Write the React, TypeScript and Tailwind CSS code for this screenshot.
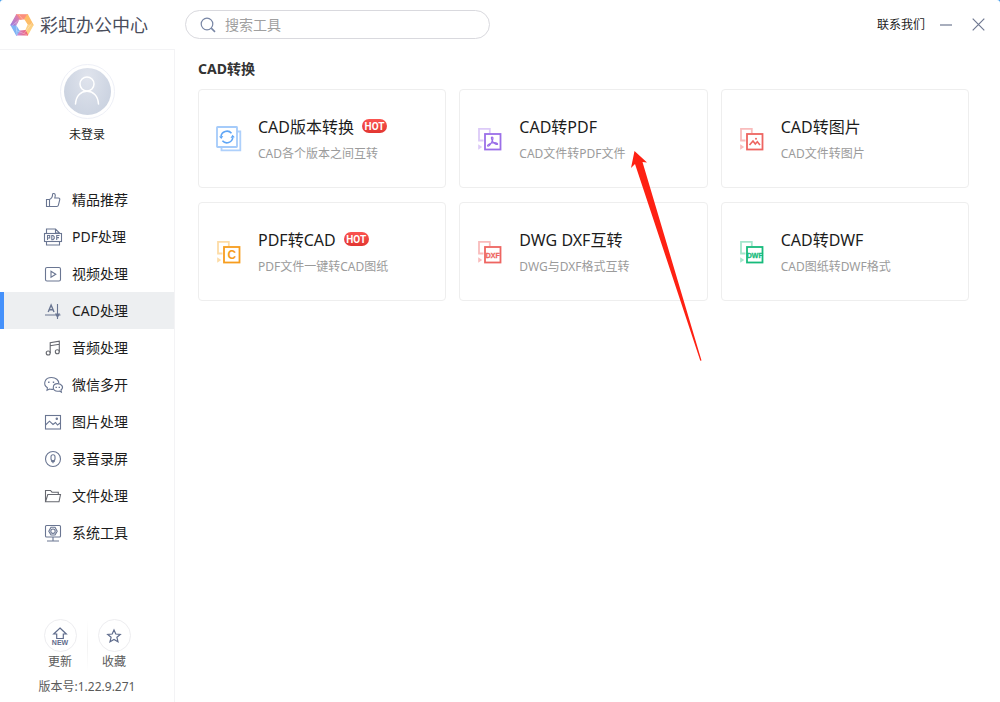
import React from "react";

const Logo = () => (
  <svg className="size-6 shrink-0" viewBox="0 0 24 24">
    <defs>
      <linearGradient id="logoLeft" x1="1" y1="0" x2="0" y2="1">
        <stop offset="0" stopColor="#ef7f9d" />
        <stop offset="1" stopColor="#9a7be0" />
      </linearGradient>
      <linearGradient id="logoBottom" x1="1" y1="0" x2="0" y2="0">
        <stop offset="0" stopColor="#f4606e" />
        <stop offset="1" stopColor="#c58be0" />
      </linearGradient>
    </defs>
    <g strokeLinejoin="round" strokeWidth="1.2">
      <path d="M6.5 1.8 L17.5 1.8 L15.5 7 L9.5 7 Z" fill="#fb8f7d" stroke="#fb8f7d" />
      <path d="M17.5 1.8 L23 12 L17.8 12 L14.5 6.5 Z" fill="#fdbd68" stroke="#fdbd68" />
      <path d="M23 12 L17.5 22 L14.6 17.4 L17.8 12 Z" fill="#fcd184" stroke="#fcd184" />
      <path d="M17.5 22 L6.5 22 L9.5 17 L15 17 Z" fill="url(#logoBottom)" stroke="url(#logoBottom)" />
      <path d="M6.5 22 L1 12 L6.2 12 L9.4 17.4 Z" fill="#7fb4f5" stroke="#7fb4f5" />
      <path d="M1 12 L6.5 2 L9.5 6.6 L6.2 12 Z" fill="url(#logoLeft)" stroke="url(#logoLeft)" />
    </g>
    <path d="M9 2 L18.3 12.6 M22 10 L14 20.5 M17.5 22 L6 17.5 M7 22 L6 9 M1.5 13 L10 6" stroke="#fff" strokeWidth="0.5" opacity="0.6" />
    <path d="M9.2 7 L14.4 6.6 L17.6 11.6 L15.4 17 L9.6 17.4 L6.4 12.6 Z" fill="#fff" />
  </svg>
);

// Sidebar entries, each with its own 18px line icon
const menu = [
  {
    label: "精品推荐",
    icon: (
      <path d="M2.5 8.5 H5.5 V15.5 H2.5 Z M5.5 8.5 C7.5 7.5 8.6 5.5 8.6 3.2 C8.8 2 11.3 2.2 11.3 4.5 L10.8 7 H14.3 C15.6 7 16 7.8 15.7 8.8 L14.4 14.2 C14.2 15.1 13.6 15.5 12.8 15.5 H5.5" />
    ),
  },
  {
    label: "PDF处理",
    icon: (
      <>
        <path d="M2.5 5.5 V1 H11.5 L15.5 5 V5.5 M11.5 1 V5 H15.5 M2.5 13.5 V17 H15.5 V13.5" />
        <rect x="0.5" y="5.5" width="17" height="8" />
        <path d="M3.5 12 V7.5 H5.7 V10 H3.5 M7.8 7.5 V11.7 H9 L10.2 10.5 V8.7 L9 7.5 Z M12.7 12 V7.5 H15.5 M12.7 9.6 H15" />
      </>
    ),
  },
  {
    label: "视频处理",
    icon: (
      <>
        <rect x="1.5" y="2.5" width="15" height="13.5" rx="1.5" />
        <path d="M7 6.3 L11.8 9.2 L7 12.2 Z" />
      </>
    ),
  },
  {
    label: "CAD处理",
    active: true,
    icon: (
      <>
        <path d="M4.2 10 L7.1 3 L10 10 M5.3 7.8 H9" strokeWidth="1.4" />
        <path d="M1 13 H16.5 M13.5 2 V17" />
        <path d="M11.8 12 L13.5 15.2 L15.2 12 Z" fill="#6a7692" />
      </>
    ),
  },
  {
    label: "音频处理",
    dark: true,
    icon: (
      <>
        <path d="M6.2 14 V3.8 L15.3 2.2 V12.8 M6.2 6.7 L15.3 5.2" />
        <circle cx="4.2" cy="14" r="2" />
        <circle cx="13.3" cy="12.8" r="2" />
      </>
    ),
  },
  {
    label: "微信多开",
    icon: (
      <>
        <path d="M9.5 13.2 C8 13.5 6.7 13.4 5.5 13 L3 14.2 L3.4 11.8 C-1.6 8.3 0.8 1.5 7.5 1.5 C12 1.5 14.8 4.3 14.8 7.3" />
        <path d="M13.7 7.6 C8 7.6 7.6 15.3 13.7 15.3 C14.4 15.3 15 15.2 15.5 15 L17.4 16.2 L17 14 C20.3 11.5 17.7 7.6 13.7 7.6 Z" />
        <path d="M4.8 5.5 V7 M9.5 5.5 V7 M12.2 10.8 V12 M15.3 10.8 V12" strokeWidth="1.4" />
      </>
    ),
  },
  {
    label: "图片处理",
    icon: (
      <>
        <rect x="1.5" y="2.5" width="15" height="13.5" />
        <path d="M1.5 12 L5.5 8.2 L9 11.5 L11.5 9.5 L13.5 12 L16.5 9.8" />
        <circle cx="12.8" cy="5.7" r="0.7" />
      </>
    ),
  },
  {
    label: "录音录屏",
    icon: (
      <>
        <circle cx="9" cy="9" r="7.5" />
        <rect x="7" y="4.8" width="4" height="6" rx="2" />
        <path d="M9 10.8 V13.3 M7.3 11.3 C8.3 12 9.7 12 10.7 11.3" />
      </>
    ),
  },
  {
    label: "文件处理",
    dark: true,
    icon: (
      <path d="M1.5 14.8 V3.5 H6.5 L8 5.2 H14.3 V7.5 M1.5 14.8 L3.8 7.5 H16.5 L15 14.8 Z" />
    ),
  },
  {
    label: "系统工具",
    icon: (
      <>
        <rect x="1.5" y="1.5" width="15" height="11.5" rx="1" />
        <path d="M9 13 V16.5 M3 17 H15 M7 3.3 H11 L13.2 7.2 L11 11 H7 L4.8 7.2 Z" />
        <circle cx="9" cy="7.2" r="2.2" />
      </>
    ),
  },
];

// Two overlapping sheets with a small arrow, shared by most tools
const ConvertIcon = ({ color, light, children }: { color: string; light: string; children: React.ReactNode }) => (
  <svg className="size-[26px] shrink-0 font-['Liberation_Sans',sans-serif]" viewBox="0 0 26 26" fill="none">
    <path d="M6.5 14.5 H2 V2.8 H12.8 V7" stroke={light} strokeWidth="1.8" />
    <path d="M1.2 18.2 L5.2 21 L1.2 23.8 Z" fill={light} />
    <rect x="8" y="8" width="15.5" height="15.5" stroke={color} strokeWidth="1.8" />
    {children}
  </svg>
);

const tools = [
  {
    title: "CAD版本转换",
    desc: "CAD各个版本之间互转",
    hot: true,
    icon: (
      <svg className="size-[26px] shrink-0" viewBox="0 0 26 26" fill="none">
        <path d="M21 5.5 H24.3 V24.3 H5.5 V21" stroke="#aed0fb" strokeWidth="1.8" />
        <rect x="1" y="1" width="20" height="20" rx="0.5" stroke="#a5cbfa" strokeWidth="1.8" />
        <path d="M5 10.5 A6 6 0 0 1 15.5 7.2 M16.8 11.5 A6 6 0 0 1 6.4 14.8" stroke="#5fa6f6" strokeWidth="1.6" />
        <path d="M3 10.5 L7.3 10 L5.3 13 Z M18.8 11.3 L14.5 12 L16.5 8.8 Z" fill="#5fa6f6" />
      </svg>
    ),
  },
  {
    title: "CAD转PDF",
    desc: "CAD文件转PDF文件",
    icon: (
      <ConvertIcon color="#9b6fe8" light="#dccaf8">
        <path d="M15 11 C16.7 11 15.8 14 14.6 16.3 C13.4 18.7 11.6 20.7 10.7 20 C9.9 19.2 12.4 17.6 15.2 17 C18.1 16.3 20.7 16.9 20.6 18 C20.3 19.2 17.5 17.8 16 15.8 C14.6 13.8 13.8 11.1 15 11 Z" stroke="#9b6fe8" strokeWidth="1.2" />
      </ConvertIcon>
    ),
  },
  {
    title: "CAD转图片",
    desc: "CAD文件转图片",
    icon: (
      <ConvertIcon color="#ee6561" light="#f9bcbc">
        <path d="M10.5 19 L14 15 L16.3 18 L18.3 15.8 L21 19" stroke="#ee6561" strokeWidth="1.6" />
        <circle cx="17" cy="12.8" r="1" fill="#ee6561" />
      </ConvertIcon>
    ),
  },
  {
    title: "PDF转CAD",
    desc: "PDF文件一键转CAD图纸",
    hot: true,
    icon: (
      <ConvertIcon color="#f79d1e" light="#fddca6">
        <text x="15.8" y="20.2" textAnchor="middle" fontSize="12" fontWeight="700" fill="#f79d1e">C</text>
      </ConvertIcon>
    ),
  },
  {
    title: "DWG DXF互转",
    desc: "DWG与DXF格式互转",
    icon: (
      <ConvertIcon color="#ee6561" light="#f9bcbc">
        <text x="15.8" y="18.6" textAnchor="middle" fontSize="7" fontWeight="700" fill="#ee6561" stroke="#ee6561" strokeWidth="0.3">DXF</text>
      </ConvertIcon>
    ),
  },
  {
    title: "CAD转DWF",
    desc: "CAD图纸转DWF格式",
    icon: (
      <ConvertIcon color="#17bb7c" light="#a3e6cb">
        <text x="15.8" y="18.6" textAnchor="middle" fontSize="7" fontWeight="700" fill="#17bb7c" stroke="#17bb7c" strokeWidth="0.3">DWF</text>
      </ConvertIcon>
    ),
  },
];

const App = () => {
  return (
    <div className="bg-[#3f9bea]">
      <div className="relative flex min-h-screen rounded-t-[3px] bg-white font-['Noto_Sans','Noto_Sans_CJK_SC',sans-serif] text-[#1c1c1c]">
        {/* Sidebar */}
        <aside className="flex w-[175px] shrink-0 flex-col">
          <div className="flex h-[50px] items-center gap-1.5 border-b border-[#f3f3f5] pl-2.5">
            <Logo />
            <h1 className="text-lg whitespace-nowrap text-[#4a4e5c]">彩虹办公中心</h1>
          </div>

          <div className="flex flex-1 flex-col border-r border-[#f3f3f5] pt-3.5">
            <button className="flex flex-col items-center">
              <span className="flex size-[55px] items-center justify-center rounded-full border border-[#eef0f7]">
                <span className="flex size-[47px] items-center justify-center rounded-full bg-radial-[at_50%_20%] from-[#e0e4ed] to-[#c5cedd]">
                  <svg className="size-8" viewBox="0 0 32 32" fill="none" stroke="#fff" strokeWidth="1.5" strokeLinecap="round">
                    <circle cx="16" cy="8" r="7" />
                    <path d="M4.5 28 C5 19.5 10 15.3 16 15.3 C22 15.3 27 19.5 27.5 28" />
                  </svg>
                </span>
              </span>
              <span className="mt-1.5 text-xs leading-5">未登录</span>
            </button>

            <nav className="mt-9">
              {menu.map((item) => (
                <a
                  key={item.label}
                  href="#"
                  className={
                    item.active
                      ? "flex h-[37px] items-center gap-2.5 border-l-4 border-[#4591fb] bg-[#edeff1] pl-10 text-sm"
                      : "flex h-[37px] items-center gap-2.5 border-l-4 border-transparent pl-10 text-sm"
                  }
                >
                  <svg
                    className="size-[18px] shrink-0 overflow-visible"
                    viewBox="0 0 18 18"
                    fill="none"
                    stroke={item.dark ? "#66686f" : "#6a7692"}
                    strokeWidth="1.1"
                  >
                    {item.icon}
                  </svg>
                  {item.label}
                </a>
              ))}
            </nav>

            <div className="mt-auto pt-6 pb-[7px] text-center text-xs text-[#5a5a5a]">
              <div className="flex justify-center gap-2.5">
                <button className="flex w-[33px] flex-col items-center">
                  <span className="flex size-[33px] items-center justify-center rounded-full border border-[#ededf0]">
                    <svg className="size-[18px] overflow-visible font-['Liberation_Sans',sans-serif]" viewBox="0 0 18 18" fill="none">
                      <path d="M9 1 L15.3 7 H12.3 V11.5 H5.7 V7 H2.7 Z" stroke="#5f6c8c" strokeWidth="1.2" />
                      <text x="9" y="18" textAnchor="middle" fontSize="7" fontWeight="700" fill="#5f6c8c">NEW</text>
                    </svg>
                  </span>
                  <span className="leading-5">更新</span>
                </button>
                <span className="w-px bg-linear-to-b from-white via-[#f2f2f2] to-white" />
                <button className="flex w-[33px] flex-col items-center">
                  <span className="flex size-[33px] items-center justify-center rounded-full border border-[#ededf0]">
                    <svg className="size-4" viewBox="0 0 16 16" fill="none" stroke="#5f6c8c" strokeWidth="1.2">
                      <path d="M8 2 L9.8 6 L14.3 6.4 L10.9 9.3 L12 13.8 L8 11.4 L4 13.8 L5.1 9.3 L1.7 6.4 L6.2 6 Z" />
                    </svg>
                  </span>
                  <span className="leading-5">收藏</span>
                </button>
              </div>
              <p className="mt-[7px] leading-4">版本号:1.22.9.271</p>
            </div>
          </div>
        </aside>

        <div className="flex min-w-0 flex-1 flex-col">
          {/* Top bar */}
          <header className="flex h-[50px] items-center pr-[15px] pb-px pl-2.5">
            <label className="flex h-[29px] w-[305px] items-center gap-[9px] rounded-full border border-[#d9d9de] pl-3.5">
              <svg className="size-4 shrink-0" viewBox="0 0 16 16" fill="none" stroke="#7886a5" strokeWidth="1.2">
                <circle cx="7" cy="7" r="5.8" />
                <path d="M11.2 11.2 L15 14.8" strokeWidth="1.6" />
              </svg>
              <input
                type="text"
                aria-label="搜索工具"
                placeholder="搜索工具"
                className="min-w-0 flex-1 bg-transparent text-sm outline-none placeholder:text-[#a0a0a0]"
              />
            </label>
            <div className="ml-auto flex items-center">
              <a href="#" className="text-xs">联系我们</a>
              <button aria-label="最小化" className="ml-[15px]">
                <svg className="size-3" viewBox="0 0 12 12" stroke="#6f7891" strokeWidth="1.2">
                  <path d="M0 6 H12" />
                </svg>
              </button>
              <button aria-label="关闭" className="ml-5">
                <svg className="size-[13px]" viewBox="0 0 13 13" stroke="#6f7891" strokeWidth="1.2">
                  <path d="M0.7 0.7 L12.3 12.3 M12.3 0.7 L0.7 12.3" />
                </svg>
              </button>
            </div>
          </header>

          {/* Tool cards */}
          <main className="pt-[9px] pr-[31px] pl-[23px]">
            <h2 className="text-sm leading-5 font-bold text-[#333]">CAD转换</h2>
            <div className="mt-2.5 grid grid-cols-3 gap-x-[13px] gap-y-3.5">
              {tools.map((tool) => (
                <a
                  key={tool.title}
                  href="#"
                  className="flex items-center gap-4 rounded-[4px] border border-[#eeeeee] pt-6 pb-[23px] pl-[17px]"
                >
                  {tool.icon}
                  <div className="whitespace-nowrap">
                    <h3 className="flex items-center gap-2 text-base leading-[26px]">
                      {tool.title}
                      {tool.hot && (
                        <span className="mb-0.5 flex h-3.5 w-[25px] items-center justify-center rounded-full bg-linear-to-b from-[#fb5450] to-[#e23531] pt-px font-['Roboto',sans-serif] text-[10px] leading-none font-bold text-white">
                          HOT
                        </span>
                      )}
                    </h3>
                    <p className="mt-1 text-xs leading-5 text-[#9b9b9b]">{tool.desc}</p>
                  </div>
                </a>
              ))}
            </div>
          </main>
        </div>

        {/* Pointer to the CAD转PDF card */}
        <svg className="pointer-events-none absolute top-[150px] left-[630px] h-[212px] w-[72px]" viewBox="0 0 72 212">
          <path d="M4.5 1 L17 12.5 L12.5 12 L71.5 210.5 L70.3 210.8 L5 14 L1 18 Z" fill="#fe2113" />
        </svg>
      </div>
    </div>
  );
};

export default App;
